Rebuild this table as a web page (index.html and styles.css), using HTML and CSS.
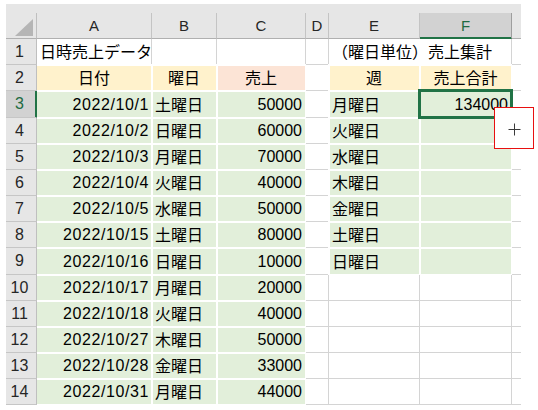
FILE: index.html
```html
<!DOCTYPE html>
<html lang="ja">
<head>
<meta charset="utf-8">
<title>Sheet</title>
<link rel="stylesheet" href="styles.css">
</head>
<body>
<div class="sheet">
  <div class="strip"></div>
  <div class="grid">
    <div class="corner"><svg width="30" height="25" viewBox="0 0 30 25"><polygon points="27,6 27,23 9,23" fill="#b5b5b5"/></svg></div>
    <div class="ch">A</div>
    <div class="ch">B</div>
    <div class="ch">C</div>
    <div class="ch">D</div>
    <div class="ch">E</div>
    <div class="ch sel">F</div>
    <div class="ch stub"></div>

    <div class="rh">1</div>
    <div class="c j">日時売上データ</div>
    <div class="c"></div>
    <div class="c"></div>
    <div class="c"></div>
    <div class="c j span2">（曜日単位）売上集計</div>
    <div class="c g"></div>

    <div class="rh">2</div>
    <div class="c fill fa y j m">日付</div>
    <div class="c fill y j m">曜日</div>
    <div class="c fill p j m">売上</div>
    <div class="c"></div>
    <div class="c fill y j m">週</div>
    <div class="c fill y j m">売上合計</div>
    <div class="c g"></div>

    <div class="rh sel">3</div>
    <div class="c fill fa gr r date">2022/10/1</div>
    <div class="c fill gr j">土曜日</div>
    <div class="c fill gr r">50000</div>
    <div class="c"></div>
    <div class="c fill gr j">月曜日</div>
    <div class="c fill gr r active">134000<div class="selbox"></div><div class="quick"><svg width="38" height="40" viewBox="0 0 38 40"><path d="M13.5 21.5H25.5M19.5 15.5V27.5" stroke="#3a3a3a" stroke-width="1" fill="none"/></svg></div></div>
    <div class="c g"></div>

    <div class="rh">4</div>
    <div class="c fill fa gr r date">2022/10/2</div>
    <div class="c fill gr j">日曜日</div>
    <div class="c fill gr r">60000</div>
    <div class="c"></div>
    <div class="c fill gr j">火曜日</div>
    <div class="c fill gr"></div>
    <div class="c g"></div>

    <div class="rh">5</div>
    <div class="c fill fa gr r date">2022/10/3</div>
    <div class="c fill gr j">月曜日</div>
    <div class="c fill gr r">70000</div>
    <div class="c"></div>
    <div class="c fill gr j">水曜日</div>
    <div class="c fill gr"></div>
    <div class="c g"></div>

    <div class="rh">6</div>
    <div class="c fill fa gr r date">2022/10/4</div>
    <div class="c fill gr j">火曜日</div>
    <div class="c fill gr r">40000</div>
    <div class="c"></div>
    <div class="c fill gr j">木曜日</div>
    <div class="c fill gr"></div>
    <div class="c g"></div>

    <div class="rh">7</div>
    <div class="c fill fa gr r date">2022/10/5</div>
    <div class="c fill gr j">水曜日</div>
    <div class="c fill gr r">50000</div>
    <div class="c"></div>
    <div class="c fill gr j">金曜日</div>
    <div class="c fill gr"></div>
    <div class="c g"></div>

    <div class="rh">8</div>
    <div class="c fill fa gr r date">2022/10/15</div>
    <div class="c fill gr j">土曜日</div>
    <div class="c fill gr r">80000</div>
    <div class="c"></div>
    <div class="c fill gr j">土曜日</div>
    <div class="c fill gr"></div>
    <div class="c g"></div>

    <div class="rh">9</div>
    <div class="c fill fa gr r date">2022/10/16</div>
    <div class="c fill gr j">日曜日</div>
    <div class="c fill gr r">10000</div>
    <div class="c"></div>
    <div class="c fill gr j">日曜日</div>
    <div class="c fill gr"></div>
    <div class="c g"></div>

    <div class="rh">10</div>
    <div class="c fill fa gr r date">2022/10/17</div>
    <div class="c fill gr j">月曜日</div>
    <div class="c fill gr r">20000</div>
    <div class="c"></div>
    <div class="c"></div>
    <div class="c"></div>
    <div class="c g"></div>

    <div class="rh">11</div>
    <div class="c fill fa gr r date">2022/10/18</div>
    <div class="c fill gr j">火曜日</div>
    <div class="c fill gr r">40000</div>
    <div class="c"></div>
    <div class="c"></div>
    <div class="c"></div>
    <div class="c g"></div>

    <div class="rh">12</div>
    <div class="c fill fa gr r date">2022/10/27</div>
    <div class="c fill gr j">木曜日</div>
    <div class="c fill gr r">50000</div>
    <div class="c"></div>
    <div class="c"></div>
    <div class="c"></div>
    <div class="c g"></div>

    <div class="rh">13</div>
    <div class="c fill fa gr r date">2022/10/28</div>
    <div class="c fill gr j">金曜日</div>
    <div class="c fill gr r">33000</div>
    <div class="c"></div>
    <div class="c"></div>
    <div class="c"></div>
    <div class="c g"></div>

    <div class="rh">14</div>
    <div class="c fill fa gr r date">2022/10/31</div>
    <div class="c fill gr j">月曜日</div>
    <div class="c fill gr r">44000</div>
    <div class="c"></div>
    <div class="c"></div>
    <div class="c"></div>
    <div class="c g"></div>
  </div>
</div>
</body>
</html>
```

FILE: styles.css
```css
* { box-sizing: border-box; }
html, body { margin: 0; padding: 0; background: #fff; }
body { font-family: "Liberation Sans", "Noto Sans CJK JP", sans-serif; color: #000; }

.sheet { margin: 4px 0 0 6px; width: 515px; }
.strip { height: 9px; background: #e6e6e6; }

.grid {
  display: grid;
  grid-template-columns: 31px 115px 65px 89px 23px 91px 92px 9px;
  grid-template-rows: 26px 26px 26px 27px 26px 26px 26px 26px 26px 27px 26px 26px 26px 26px 26px;
}

.corner {
  background: #e6e6e6;
  border-right: 1px solid #bfbfbf;
  border-bottom: 1px solid #b0b0b0;
  display: flex;
}

.ch {
  background: #e6e6e6;
  border-right: 1px solid #c4c4c4;
  border-bottom: 1px solid #b0b0b0;
  display: flex;
  align-items: center;
  justify-content: center;
  font-size: 15px;
  color: #262626;
}
.ch.stub { border-right: 0; }
.ch.sel {
  background: #d2d2d2;
  color: #1e6b41;
  border-right-color: #9e9e9e;
  border-bottom-color: #217346;
  box-shadow: inset 0 -1px 0 #217346;
}

.rh {
  background: #e6e6e6;
  border-right: 1px solid #bfbfbf;
  border-bottom: 1px solid #c6c6c6;
  display: flex;
  align-items: center;
  justify-content: center;
  padding-right: 3px;
  font-size: 16px;
  color: #262626;
}
.rh.sel {
  background: #d2d2d2;
  color: #1e6b41;
  border-right-color: #217346;
  box-shadow: inset -1px 0 0 #217346;
}

.c {
  border-right: 1px solid #d4d4d4;
  border-bottom: 1px solid #d4d4d4;
  padding: 0 3px;
  display: flex;
  align-items: center;
  white-space: nowrap;
  min-width: 0;
  font-size: 16px;
  line-height: 18px;
}
.c.g { border-right: 0; }
.span2 { grid-column: span 2; }

.fill {
  margin: -1px 0 0 -1px;
  border: 1px solid #fff;
  border-top-width: 2px;
  border-left-width: 2px;
  padding-left: 2px;
}
.fill.fa {
  margin-left: 0;
  border-left-width: 0;
  padding-left: 3px;
}
.date { letter-spacing: 0.6px; padding-right: 2px; }

.y { background: #fff2cc; }
.p { background: #fce4d6; }
.gr { background: #e2efda; }

.r { justify-content: flex-end; }
.m { justify-content: center; }
.j {
  font-family: "Noto Sans CJK JP", sans-serif;
  line-height: 16px;
  padding-bottom: 2px;
}

.active { position: relative; }
.selbox {
  position: absolute;
  left: -3px;
  top: -3px;
  width: 95px;
  height: 30px;
  border: 3px solid #217346;
}
.quick {
  position: absolute;
  left: 73px;
  top: 15px;
  width: 40px;
  height: 42px;
  background: #fff;
  border: 1px solid #e81010;
  z-index: 2;
}
.quick svg { display: block; }
```
